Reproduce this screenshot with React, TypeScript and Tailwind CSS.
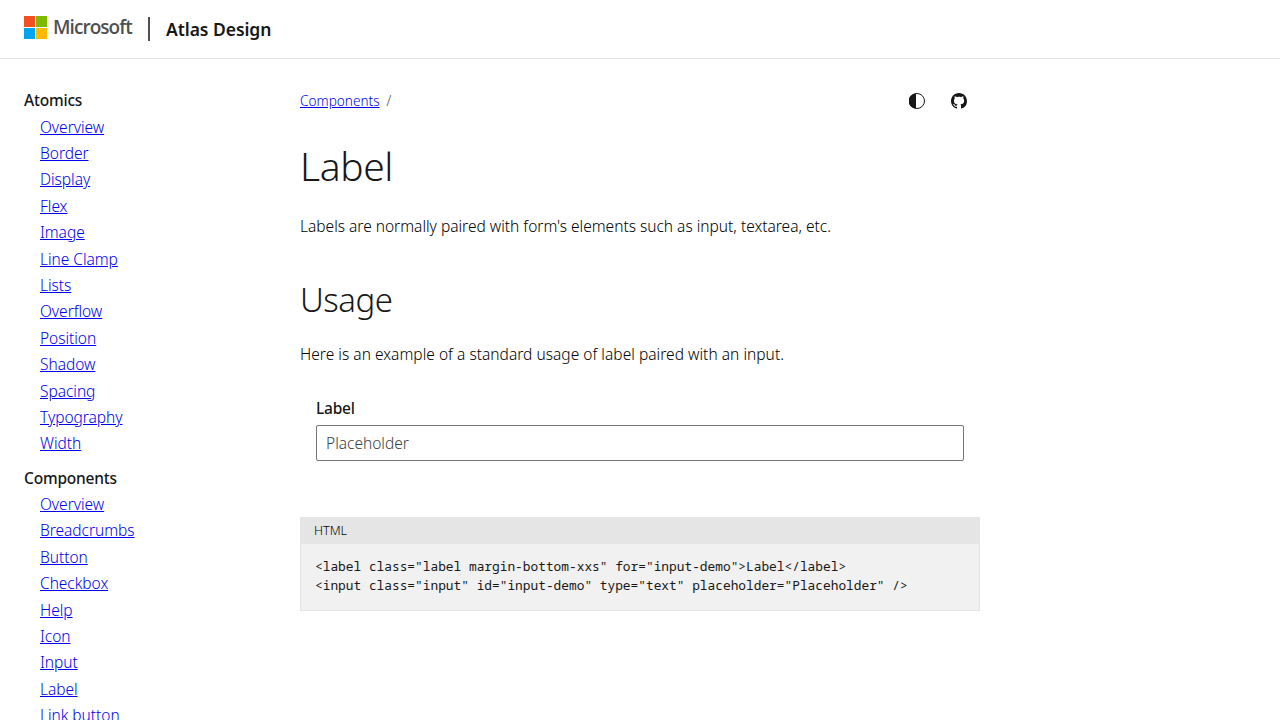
const sections = [
  {
    title: 'Atomics',
    items: ['Overview', 'Border', 'Display', 'Flex', 'Image', 'Line Clamp', 'Lists', 'Overflow', 'Position', 'Shadow', 'Spacing', 'Typography', 'Width'],
  },
  {
    title: 'Components',
    items: ['Overview', 'Breadcrumbs', 'Button', 'Checkbox', 'Help', 'Icon', 'Input', 'Label', 'Link button'],
  },
];

const code = `<label class="label margin-bottom-xxs" for="input-demo">Label</label>
<input class="input" id="input-demo" type="text" placeholder="Placeholder" />`;

function Header() {
  return (
    <header className="flex h-[59px] shrink-0 items-start border-b border-[#e5e5e5] pl-6">
      <div className="mt-4 grid h-[23px] w-[23px] grid-cols-2 gap-px">
        <span className="bg-[#f25022]" />
        <span className="bg-[#7fba00]" />
        <span className="bg-[#00a4ef]" />
        <span className="bg-[#ffb900]" />
      </div>
      <span className="mt-[15px] ml-[6px] w-[80px] font-['Open_Sans',sans-serif] text-[19px] leading-[25px] font-semibold tracking-[-0.95px] text-[#505050]">Microsoft</span>
      <span className="mt-[17px] ml-[15px] h-6 w-[2px] bg-[#505050]" />
      <span className="mt-[17px] ml-4 text-[17.5px] leading-[25px] font-semibold tracking-[-0.05px]">Atlas Design</span>
    </header>
  );
}

function Sidebar() {
  return (
    <nav className="flex h-[661px] w-[300px] shrink-0 flex-col gap-[7.7px] overflow-hidden pt-[28.2px] pl-6 text-[15.5px] leading-[26.4px]">
      {sections.map((s) => (
        <div key={s.title}>
          <div className="font-medium tracking-[-0.2px]">{s.title}</div>
          <ul className="pl-4 font-light tracking-[-0.03px]">
            {s.items.map((i) => (
              <li key={i}>
                <a href="#" className="text-[#0000ee] underline">{i}</a>
              </li>
            ))}
          </ul>
        </div>
      ))}
    </nav>
  );
}

export default function App() {
  return (
    <div className="flex h-[720px] w-[1280px] flex-col overflow-hidden bg-white font-['Noto_Sans',sans-serif] text-[#171717]">
      <Header />
      <div className="flex">
        <Sidebar />
        <main className="flex w-[680px] flex-col">
          <div className="mt-[30px] flex h-6 items-center text-[13.6px]">
            <a href="#" className="font-light text-[#0000ee] underline">Components</a>
            <span className="ml-[7px] font-light text-[#505050]">/</span>
            <div className="mr-[13px] ml-auto flex gap-[26px]">
              <svg width="16" height="16" viewBox="0 0 16 16">
                <circle cx="8" cy="8" r="7.5" fill="none" stroke="#171717" />
                <path d="M7 .5a7.5 7.5 0 0 0 0 15z" fill="#171717" />
              </svg>
              <svg width="16" height="16" viewBox="0 0 16 16" fill="#171717">
                <path d="M8 0C3.58 0 0 3.58 0 8c0 3.54 2.29 6.53 5.47 7.59.4.07.55-.17.55-.38 0-.19-.01-.82-.01-1.49-2.01.37-2.53-.49-2.69-.94-.09-.23-.48-.94-.82-1.13-.28-.15-.68-.52-.01-.53.63-.01 1.08.58 1.23.82.72 1.21 1.87.87 2.33.66.07-.52.28-.87.51-1.07-1.78-.2-3.64-.89-3.64-3.95 0-.87.31-1.59.82-2.15-.08-.2-.36-1.02.08-2.12 0 0 .67-.21 2.2.82.64-.18 1.32-.27 2-.27s1.36.09 2 .27c1.53-1.04 2.2-.82 2.2-.82.44 1.1.16 1.92.08 2.12.51.56.82 1.27.82 2.15 0 3.07-1.87 3.75-3.65 3.95.29.25.54.73.54 1.48 0 1.07-.01 1.93-.01 2.2 0 .21.15.46.55.38A8.01 8.01 0 0 0 16 8c0-4.42-3.58-8-8-8z" />
              </svg>
            </div>
          </div>
          <h1 className="mt-[27px] text-[39px] leading-[52px] font-light tracking-[-0.4px]">Label</h1>
          <p className="mt-[22px] text-[15.5px] leading-6 font-light text-black">Labels are normally paired with form's elements such as input, textarea, etc.</p>
          <h2 className="mt-[40px] text-[33px] leading-[44px] font-light tracking-[-0.5px]">Usage</h2>
          <p className="mt-[20px] text-[15.5px] leading-6 font-light tracking-[0.03px] text-black">Here is an example of a standard usage of label paired with an input.</p>
          <div className="mt-[30px] flex flex-col px-4">
            <label htmlFor="input-demo" className="text-[15.5px] leading-6 font-medium tracking-[-0.25px]">Label</label>
            <input id="input-demo" type="text" placeholder="Placeholder" className="mt-[5px] h-9 rounded-[2px] border border-[#757575] px-[9px] text-[15.5px] font-light placeholder:text-[#404040]" />
          </div>
          <div className="mt-[56px]">
            <div className="h-[27px] bg-[#e5e5e5] pl-[14px] text-[12.5px] leading-[27px] font-light text-black">HTML</div>
            <pre className="h-[67px] border border-t-0 border-[#e5e5e5] bg-[#f1f1f1] pt-[13px] pl-[14px] font-['Noto_Sans_Mono','DejaVu_Sans_Mono',monospace] text-[12.83px] leading-[19px]">{code}</pre>
          </div>
        </main>
      </div>
    </div>
  );
}
